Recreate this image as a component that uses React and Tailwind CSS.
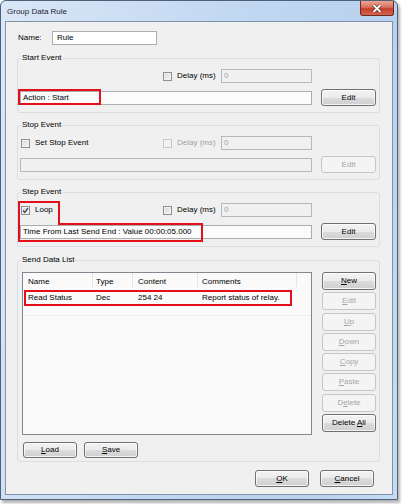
import React from "react";

function Btn({ children, disabled = false, className = "" }) {
  return (
    <button
      type="button"
      className={`flex items-center justify-center rounded-[3px] border text-[8px] leading-none ${
        disabled
          ? "border-[#c3c7ca] bg-[#f4f4f4] text-[#a6a6a6]"
          : "border-[#707070] bg-[linear-gradient(#f3f3f3_0%,#ebebeb_50%,#dcdcdc_50%,#cfcfcf_100%)] text-black shadow-[inset_0_0_0_1px_rgba(255,255,255,0.75)]"
      } ${className}`}
    >
      {children}
    </button>
  );
}

function Check({ checked = false, disabled = false }) {
  return (
    <span
      className={`flex h-[9px] w-[9px] shrink-0 items-center justify-center border ${
        disabled
          ? "border-[#c8c8c8] bg-[#f3f3f3]"
          : "border-[#8e8f8f] bg-[linear-gradient(135deg,#d5d8db,#f7f7f7)] shadow-[inset_0_0_0_1px_#f2f2f2]"
      }`}
    >
      {checked && (
        <svg width="7" height="7" viewBox="0 0 7 7">
          <path d="M1 3.5 L2.8 5.5 L6 1" fill="none" stroke="#3c4a66" strokeWidth="1.3" />
        </svg>
      )}
    </span>
  );
}

function Field({ children, disabled = false, className = "" }) {
  return (
    <div
      className={`flex h-[14px] items-center border pl-[2px] text-[8px] leading-none ${
        disabled
          ? "border-[#b5b8bc] bg-[#f0f0f0] text-[#a0a0a0]"
          : "border-[#abadb3] bg-[#fbfbfb] text-black"
      } ${className}`}
    >
      {children}
    </div>
  );
}

function Group({ title, className = "", children }) {
  return (
    <div className={`relative rounded-[3px] border border-[#d5dfe5] ${className}`}>
      <span className="absolute -top-[6px] left-[3px] bg-[#f0f0f0] px-[1px] leading-[10px]">
        {title}
      </span>
      {children}
    </div>
  );
}

function EventGroup({ title, left, delayDisabled, text, textDisabled, editDisabled, children }) {
  return (
    <Group title={title} className="h-[55px] pt-[10px]">
      <div className="flex h-[14px] items-center pl-[3px]">
        <div className="flex w-[142px] items-center">{left}</div>
        <Check disabled={delayDisabled} />
        <span className={`ml-[5px] w-[44px] ${delayDisabled ? "text-[#a0a0a0]" : ""}`}>Delay (ms)</span>
        <Field disabled className="w-[91px]">0</Field>
      </div>
      <div className="mt-[6px] flex h-[17px] items-center pl-[2px]">
        <Field disabled={textDisabled} className="w-[292px]">{text}</Field>
        <Btn disabled={editDisabled} className="ml-[9px] h-[17px] w-[55px]">Edit</Btn>
      </div>
      {children}
    </Group>
  );
}

const sideButtons = [
  { label: "New", u: 0 },
  { label: "Edit", u: 0, disabled: true },
  { label: "Up", u: 0, disabled: true },
  { label: "Down", u: 0, disabled: true },
  { label: "Copy", u: 0, disabled: true },
  { label: "Paste", u: 0, disabled: true },
  { label: "Delete", u: 1, disabled: true },
  { label: "Delete All", u: 7 },
];

function Mnemonic({ text, u }) {
  return (
    <span>
      {text.slice(0, u)}
      <span className="underline underline-offset-1">{text[u]}</span>
      {text.slice(u + 1)}
    </span>
  );
}

export default function App() {
  return (
    <div className="h-[504px] w-[404px] bg-white font-['Liberation_Sans',Arial,sans-serif] text-[8px] text-black">
      <div className="flex h-[500px] w-[398px] flex-col rounded-t-[6px] border border-[#4f6079] bg-[linear-gradient(100deg,#dae7f7_0%,#c3d9f2_45%,#b9d1ee_80%,#c6dbf3_100%)] px-[4px] pb-[4px] shadow-[2px_3px_3px_rgba(0,0,0,0.3)]">
        {/* title bar */}
        <div className="flex h-[20px] items-start justify-between">
          <span className="mt-[6px] pl-[2px] text-[8px] leading-[10px] text-[#1c2530]">Group Data Rule</span>
          <div className="mr-[-1px] flex h-[15px] w-[34px] items-center justify-center rounded-b-[3px] border border-t-0 border-[#6e2a20] bg-[linear-gradient(#e9a596_0%,#d9705c_45%,#c2402a_55%,#d4644d_100%)]">
            <svg width="10" height="9" viewBox="0 0 10 9">
              <path d="M1.5 1 L8.5 8 M8.5 1 L1.5 8" stroke="#5a2018" strokeWidth="3.2" />
              <path d="M1.5 1 L8.5 8 M8.5 1 L1.5 8" stroke="#ffffff" strokeWidth="1.8" />
            </svg>
          </div>
        </div>

        {/* client */}
        <div className="flex flex-1 flex-col border border-[#7f93ad] bg-[#f0f0f0] pl-[11px] pr-[12px] pt-[9px]">
          <div className="flex h-[14px] items-center pl-[1px]">
            <span className="w-[34px]">Name:</span>
            <Field className="w-[105px] bg-white pl-[4px]">Rule</Field>
          </div>

          <div className="mt-[13px]">
            <EventGroup
              title="Start Event"
              left={null}
              delayDisabled={false}
              text="Action : Start"
            >
              <div className="absolute left-0 top-[30px] h-[16px] w-[83px] border-2 border-[#e3101c]" />
            </EventGroup>
          </div>

          <div className="mt-[12px]">
            <EventGroup
              title="Stop Event"
              left={
                <>
                  <Check />
                  <span className="ml-[5px]">Set Stop Event</span>
                </>
              }
              delayDisabled
              text=""
              textDisabled
              editDisabled
            />
          </div>

          <div className="mt-[12px]">
            <EventGroup
              title="Step Event"
              left={
                <>
                  <Check checked />
                  <span className="ml-[5px]">Loop</span>
                </>
              }
              delayDisabled={false}
              text="Time From Last Send End : Value 00:00:05.000"
            >
              <svg className="absolute left-0 top-0" width="190" height="52">
                <path
                  d="M1 9 H41 V31 H184 V48 H1 Z"
                  fill="none"
                  stroke="#e3101c"
                  strokeWidth="2"
                />
              </svg>
            </EventGroup>
          </div>

          {/* send data list */}
          <Group title="Send Data List" className="mt-[13px] h-[202px] pt-[11px]">
            <div className="flex">
              <div className="relative ml-[4px] h-[163px] w-[290px] border border-[#828790] bg-[#fafafa]">
                <div className="flex h-[17px] items-center">
                  <div className="relative w-[70px] pl-[5px]">
                    Name
                    <span className="absolute right-0 top-[-3px] h-[14px] w-px bg-[#e2e4e7]" />
                  </div>
                  <div className="relative w-[40px] pl-[3px]">
                    Type
                    <span className="absolute right-0 top-[-3px] h-[14px] w-px bg-[#e2e4e7]" />
                  </div>
                  <div className="relative w-[65px] pl-[5px]">
                    Content
                    <span className="absolute right-0 top-[-3px] h-[14px] w-px bg-[#e2e4e7]" />
                  </div>
                  <div className="relative w-[99px] pl-[4px]">
                    Comments
                    <span className="absolute right-0 top-[-3px] h-[14px] w-px bg-[#e2e4e7]" />
                  </div>
                </div>
                <div className="flex h-[16px] items-center">
                  <div className="w-[70px] pl-[5px]">Read Status</div>
                  <div className="w-[40px] pl-[3px]">Dec</div>
                  <div className="w-[65px] pl-[5px]">254 24</div>
                  <div className="w-[99px] whitespace-nowrap pl-[4px]">Report status of relay.</div>
                </div>
                <div className="mt-[9px] h-px w-full bg-[#efefef]" />
                <div className="absolute left-px top-[17px] h-[16px] w-[268px] border-2 border-[#e3101c]" />
              </div>

              <div className="ml-[10px] flex w-[54px] flex-col gap-[2.3px]">
                {sideButtons.map((b) => (
                  <Btn key={b.label} disabled={b.disabled} className="h-[18px] w-[54px]">
                    <Mnemonic text={b.label} u={b.u} />
                  </Btn>
                ))}
              </div>
            </div>

            <div className="mt-[7px] flex pl-[5px]">
              <Btn className="h-[16px] w-[54px]">
                <Mnemonic text="Load" u={0} />
              </Btn>
              <Btn className="ml-[7px] h-[16px] w-[54px]">
                <Mnemonic text="Save" u={0} />
              </Btn>
            </div>
          </Group>

          <div className="mt-[8px] flex justify-end pr-[6px]">
            <Btn className="h-[17px] w-[54px]">
              <Mnemonic text="OK" u={0} />
            </Btn>
            <Btn className="ml-[11px] h-[17px] w-[54px]">
              <Mnemonic text="Cancel" u={0} />
            </Btn>
          </div>
        </div>
      </div>
    </div>
  );
}
